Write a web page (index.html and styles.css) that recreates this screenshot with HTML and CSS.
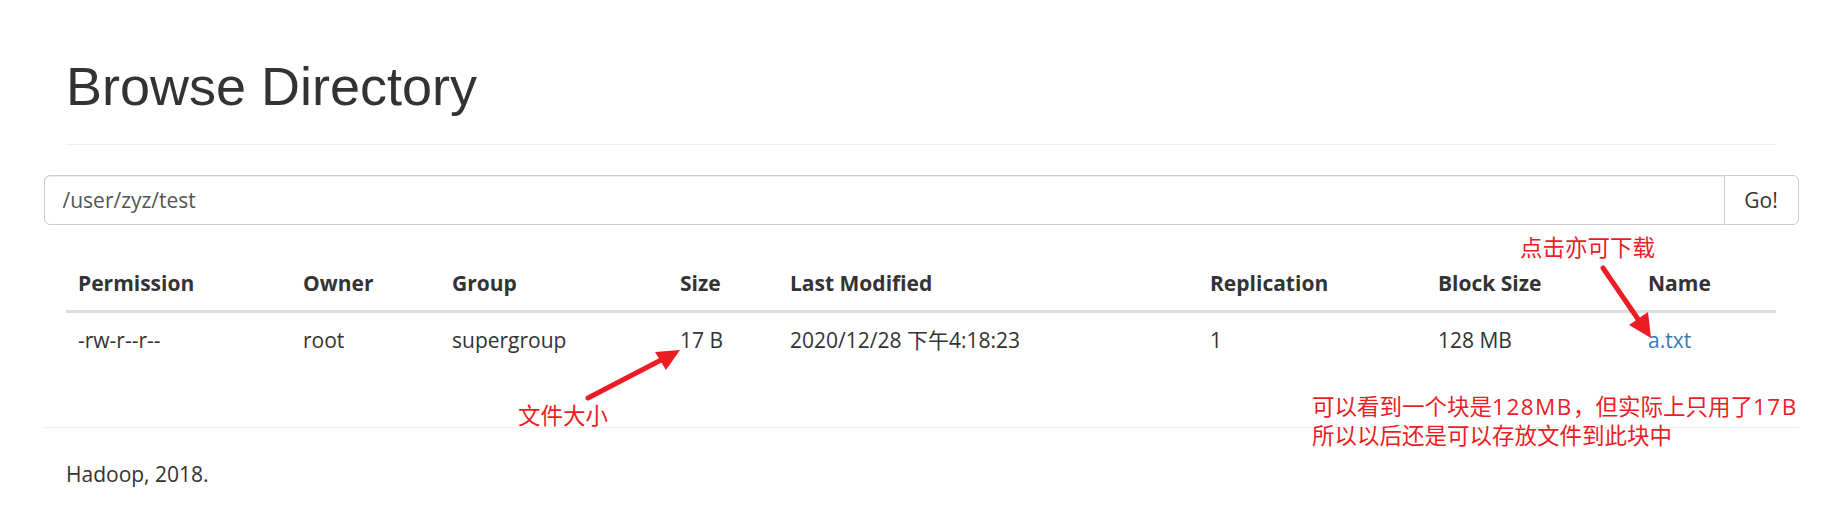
FILE: index.html
```html
<!DOCTYPE html>
<html lang="en">
<head>
<meta charset="utf-8">
<title>Browse Directory</title>
<link rel="stylesheet" href="styles.css">
</head>
<body>
<div class="page">
  <div class="container">
    <div class="page-header"><h1>Browse Directory</h1></div>
    <div class="row">
      <form class="input-group" onsubmit="return false;">
        <input type="text" class="form-control" value="/user/zyz/test">
        <button class="btn" type="button">Go!</button>
      </form>
    </div>
    <div class="row">
      <div class="col">
        <table class="table">
          <thead>
            <tr>
              <th class="c-perm">Permission</th>
              <th class="c-owner">Owner</th>
              <th class="c-group">Group</th>
              <th class="c-size">Size</th>
              <th class="c-mod">Last Modified</th>
              <th class="c-rep">Replication</th>
              <th class="c-block">Block Size</th>
              <th class="c-name">Name</th>
            </tr>
          </thead>
          <tbody>
            <tr>
              <td>-rw-r--r--</td>
              <td>root</td>
              <td>supergroup</td>
              <td>17 B</td>
              <td>2020/12/28 下午4:18:23</td>
              <td>1</td>
              <td>128 MB</td>
              <td><a href="#">a.txt</a></td>
            </tr>
          </tbody>
        </table>
      </div>
    </div>
    <div class="row">
      <hr class="footer-rule">
      <p class="col footer-text">Hadoop, 2018.</p>
    </div>
  </div>

  <div class="note note-size">文件大小</div>
  <div class="note note-download">点击亦可下载</div>
  <div class="note note-block">可以看到一个块是<span class="latin">128MB</span>，但实际上只用了<span class="latin">17B</span><br>所以以后还是可以存放文件到此块中</div>
  <svg class="arrows" width="1842" height="516" viewBox="0 0 1842 516" aria-hidden="true">
    <line x1="588" y1="398" x2="663" y2="359" stroke="#ec1c24" stroke-width="5" stroke-linecap="round"/>
    <polygon points="680,350 655,352 666,370" fill="#ec1c24"/>
    <line x1="1603" y1="268" x2="1640" y2="322" stroke="#ec1c24" stroke-width="5" stroke-linecap="round"/>
    <polygon points="1651,338 1629,325 1648,312" fill="#ec1c24"/>
  </svg>
</div>
</body>
</html>
```
FILE: styles.css
```css
* { box-sizing: border-box; }

html, body {
  margin: 0;
  padding: 0;
  background: #fff;
}

body {
  font-family: "Open Sans", "Noto Sans CJK SC", sans-serif;
  font-size: 21px;
  line-height: 30px;
  color: #333;
}

.page {
  position: relative;
  width: 1842px;
  height: 516px;
  overflow: hidden;
}

.container {
  width: 1755px;
  margin: 0 auto;
  padding: 0 22.5px;
}

.row {
  margin: 0 -22.5px;
}

.col {
  padding: 0 22.5px;
}

.page-header {
  padding-top: 57px;
  padding-bottom: 13px;
  margin-bottom: 30px;
  border-bottom: 1px solid #eee;
}

.page-header h1 {
  margin: 0 0 15px;
  font-family: "Liberation Sans", Arial, sans-serif;
  font-weight: normal;
  font-size: 54px;
  line-height: 59.4px;
  color: #333;
}

.input-group {
  display: flex;
  margin: 0;
}

.form-control {
  flex: 1;
  height: 50px;
  margin: 0;
  padding: 9px 18px;
  font-family: "Open Sans", sans-serif;
  font-size: 21px;
  line-height: 30px;
  color: #555;
  background: #fff;
  border: 1.5px solid #ccc;
  border-radius: 6px 0 0 6px;
  box-shadow: inset 0 1px 1px rgba(0,0,0,.075);
  outline: none;
}

.btn {
  width: 75px;
  height: 50px;
  margin-left: -1.5px;
  padding: 0;
  font-family: "Open Sans", sans-serif;
  font-size: 21px;
  line-height: 30px;
  color: #333;
  background: #fff;
  border: 1.5px solid #ccc;
  border-radius: 0 6px 6px 0;
}

.table {
  width: 100%;
  margin-top: 31px;
  margin-bottom: 30px;
  border-collapse: collapse;
  table-layout: fixed;
}

.table th,
.table td {
  padding: 12px;
  text-align: left;
  vertical-align: top;
  white-space: nowrap;
  line-height: 30px;
}

.table th {
  font-weight: bold;
  border-bottom: 3px solid #ddd;
}

.c-perm { width: 225px; }
.c-owner { width: 149px; }
.c-group { width: 228px; }
.c-size { width: 110px; }
.c-mod { width: 420px; }
.c-rep { width: 228px; }
.c-block { width: 210px; }
.c-name { width: 140px; }

.table a {
  color: #337ab7;
  text-decoration: none;
}

.footer-rule {
  margin: 0;
  margin-top: 60px;
  margin-bottom: 31px;
  border: 0;
  border-top: 1px solid #eee;
  height: 0;
}

.footer-text {
  margin: 0;
}

.note {
  position: absolute;
  font-family: "Open Sans", "Noto Sans CJK SC", sans-serif;
  font-size: 22.5px;
  line-height: 22px;
  color: #ec1c24;
  white-space: nowrap;
}

.note .latin {
  letter-spacing: 1.5px;
}

.note-size {
  left: 518px;
  top: 405px;
}

.note-download {
  left: 1520px;
  top: 237px;
}

.note-block {
  left: 1312px;
  top: 392px;
  line-height: 29px;
}

.arrows {
  position: absolute;
  left: 0;
  top: 0;
  pointer-events: none;
}
```
